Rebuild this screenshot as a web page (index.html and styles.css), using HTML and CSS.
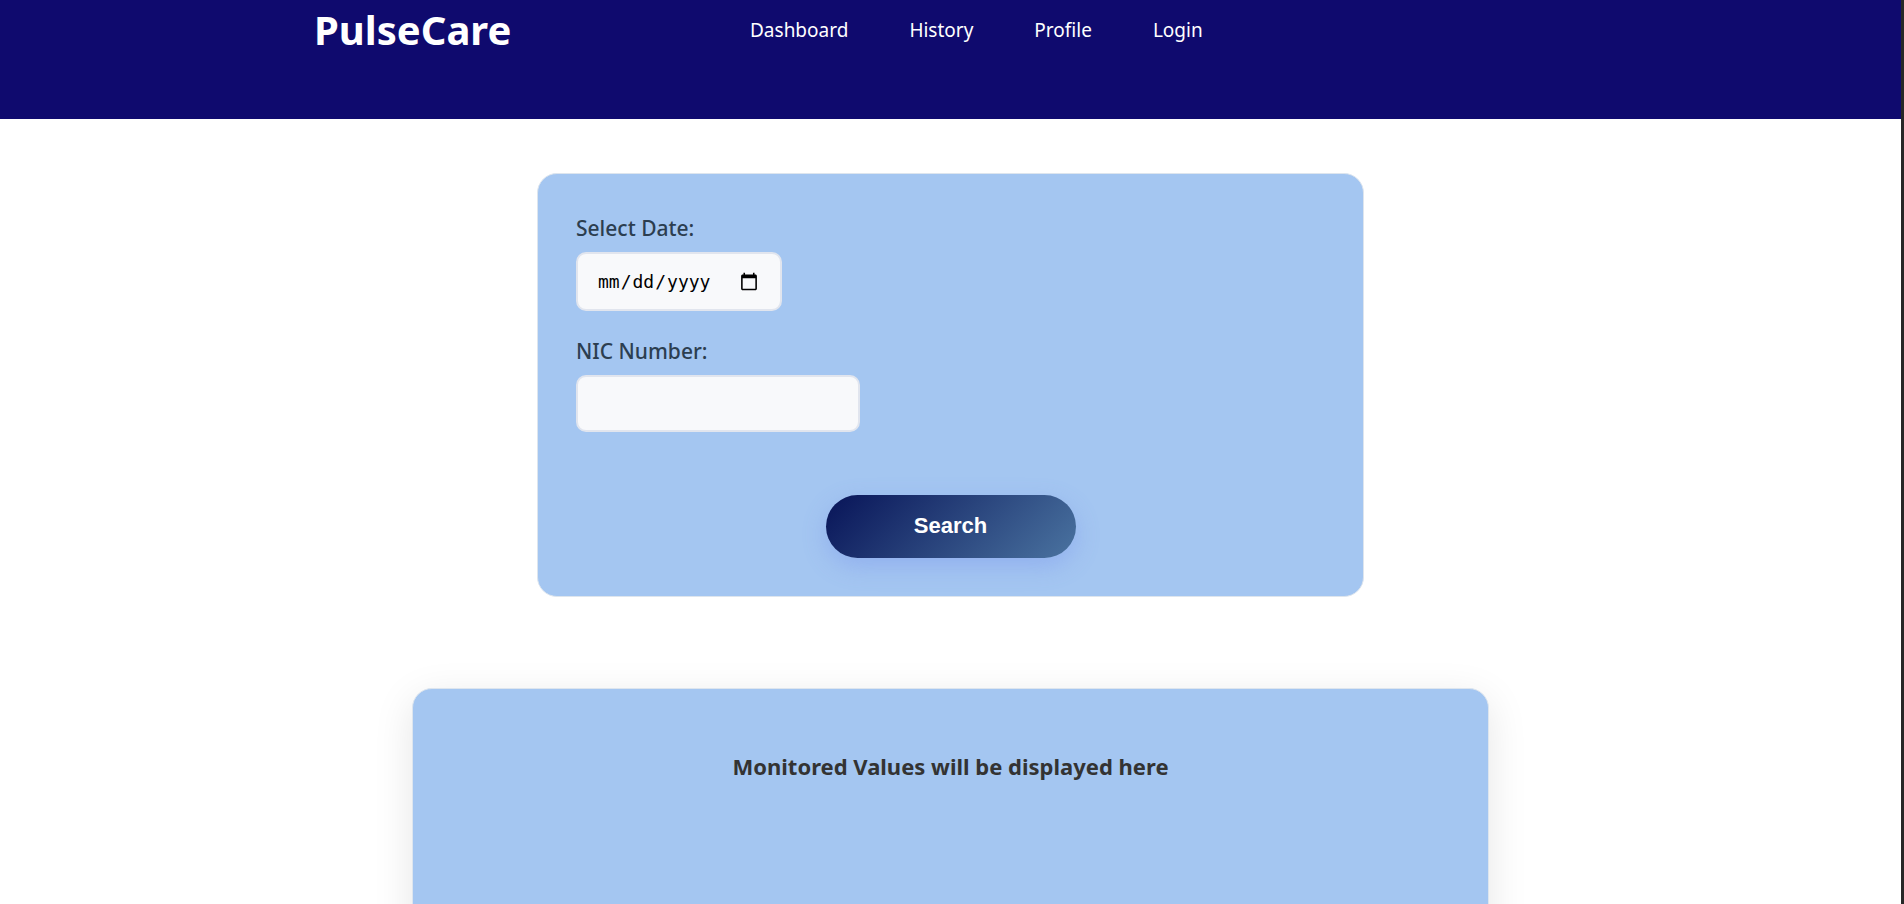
FILE: index.html
```html
<!DOCTYPE html>
<html lang="en">
<head>
<meta charset="utf-8">
<meta name="viewport" content="width=device-width, initial-scale=1">
<title>PulseCare</title>
<link rel="stylesheet" href="styles.css">
</head>
<body>
<header class="header">
  <div class="logo">PulseCare</div>
  <nav class="nav">
    <a href="#">Dashboard</a>
    <a href="#">History</a>
    <a href="#">Profile</a>
    <a href="#">Login</a>
  </nav>
</header>
<main class="main">
  <form class="card search">
    <div class="field">
      <label for="date">Select Date:</label>
      <input class="input date" type="date" id="date">
    </div>
    <div class="field">
      <label for="nic">NIC Number:</label>
      <input class="input nic" type="text" id="nic">
    </div>
    <button class="button" type="button">Search</button>
  </form>
  <section class="card results">
    <h2>Monitored Values will be displayed here</h2>
  </section>
</main>
</body>
</html>
```
FILE: styles.css
```css
* {
  box-sizing: border-box;
}

html {
  overflow: hidden;
}

body {
  margin: 0;
  min-height: 100vh;
  border-right: 3px solid #272727;
  background: #fff;
  font-family: "Segoe UI", "Noto Sans", sans-serif;
}

.header {
  display: grid;
  grid-template-columns: 436px auto;
  justify-content: start;
  align-items: center;
  padding: 0 0 59px 314px;
  background: #0f0a6e;
  color: #fff;
}

.logo {
  font-size: 40px;
  font-weight: 700;
  line-height: 60px;
}

.nav {
  display: flex;
  gap: 61px;
}

.nav a {
  color: #fff;
  font-size: 19px;
  line-height: 28px;
  text-decoration: none;
}

.main {
  display: flex;
  flex-direction: column;
  align-items: center;
  gap: 91px;
  padding-top: 54px;
}

.card {
  border: 1px solid #dde5ee;
  border-radius: 20px;
  background: #a4c6f1;
}

.search {
  display: flex;
  flex-direction: column;
  gap: 24px;
  width: 827px;
  max-width: 90%;
  padding: 38px;
}

.field {
  display: flex;
  flex-direction: column;
  align-items: flex-start;
  gap: 8px;
}

.field label {
  color: #2c3e50;
  font-size: 21px;
  font-weight: 500;
  line-height: 32px;
}

.input {
  height: 57px;
  padding: 0 19px;
  border: 2px solid #e1e5ee;
  border-radius: 10px;
  background: #f8f9fb;
  color: #000;
  font-family: Consolas, "DejaVu Sans Mono", monospace;
  font-size: 18px;
}

.date {
  width: 206px;
  height: 59px;
}

.date::-webkit-calendar-picker-indicator {
  width: 20px;
  height: 20px;
}

.nic {
  width: 284px;
}

.button {
  align-self: center;
  width: 250px;
  height: 63px;
  margin-top: 39px;
  padding-bottom: 2px;
  border: 0;
  border-radius: 32px;
  background: linear-gradient(135deg, #081458, #4a73a0);
  box-shadow: 0 8px 25px rgba(102, 126, 234, 0.3);
  color: #fff;
  font-family: "Liberation Sans", sans-serif;
  font-size: 22px;
  font-weight: 700;
}

.results {
  width: 1077px;
  max-width: 90%;
  min-height: 400px;
  padding: 60px 40px;
  box-shadow: 0 10px 40px rgba(0, 0, 0, 0.1);
}

.results h2 {
  margin: 0;
  color: #333;
  font-size: 22px;
  font-weight: 700;
  line-height: 34px;
  text-align: center;
}
```
